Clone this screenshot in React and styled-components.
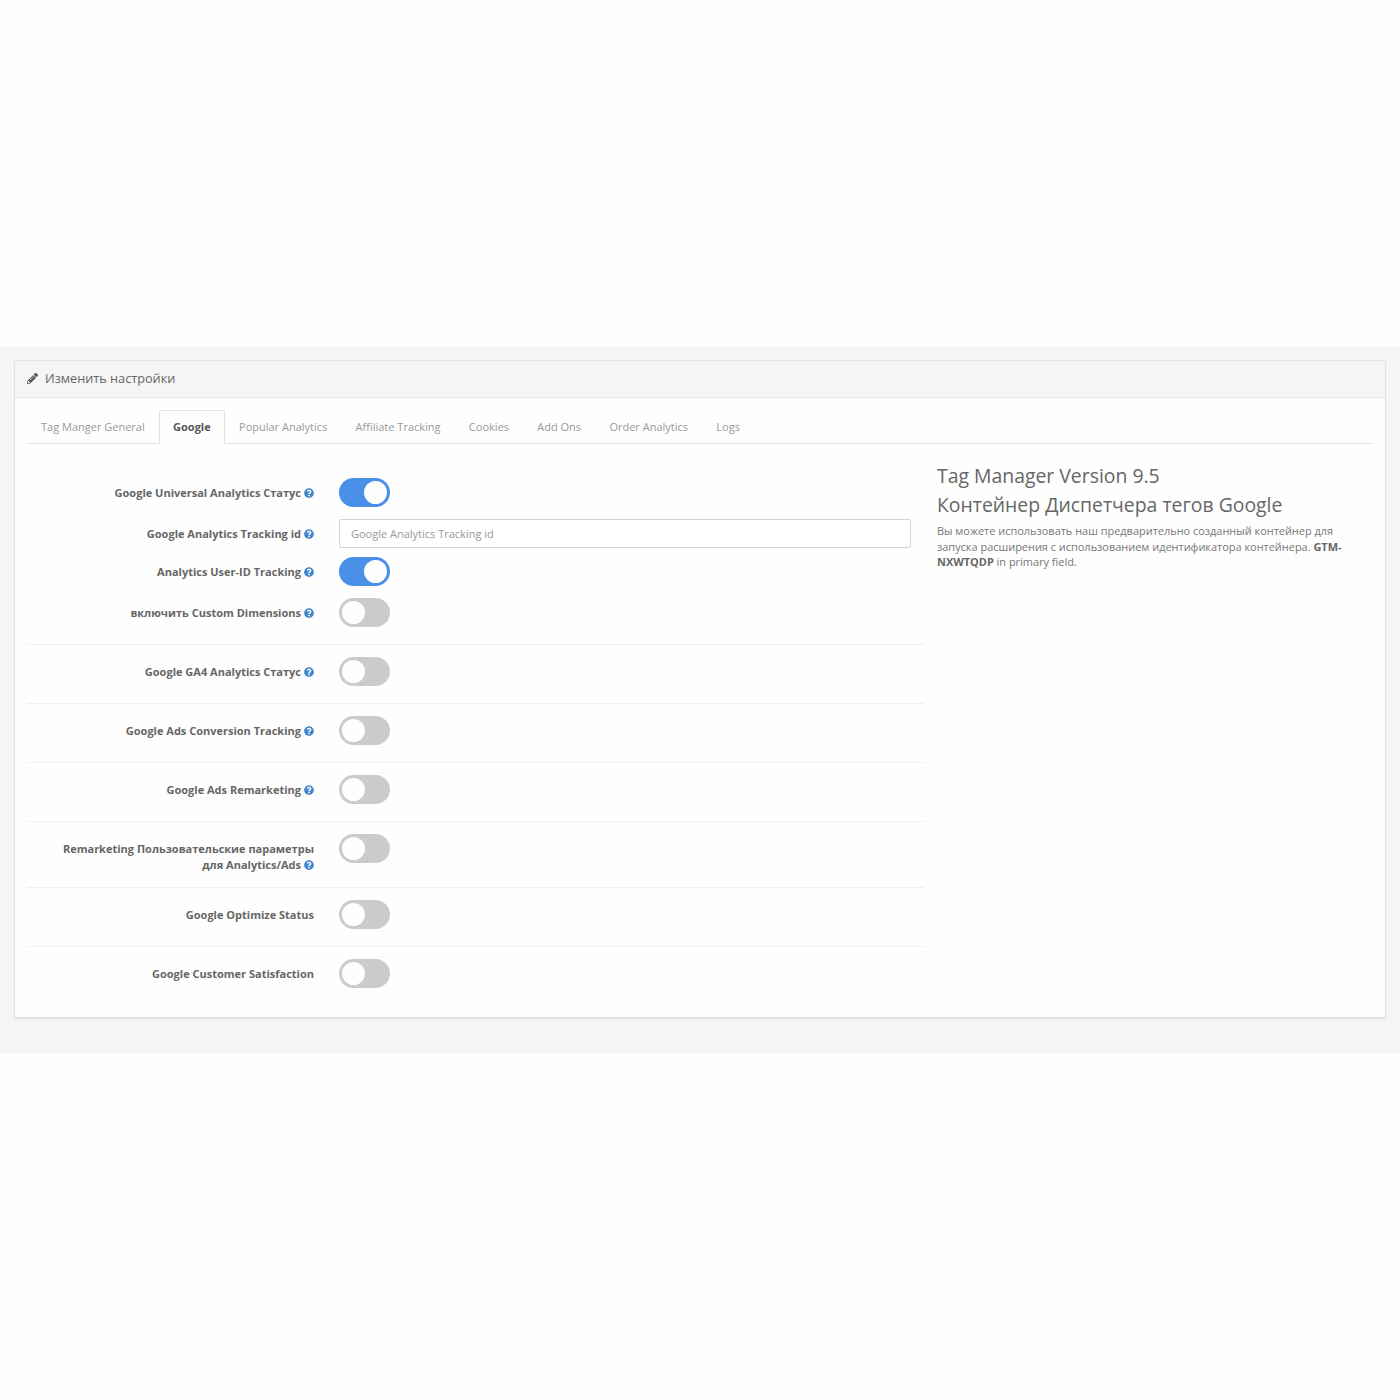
import React from 'react';
import styled, { createGlobalStyle } from 'styled-components';
import { FaPencilAlt, FaQuestionCircle } from 'react-icons/fa';

const TABS = [
	'Tag Manger General',
	'Google',
	'Popular Analytics',
	'Affiliate Tracking',
	'Cookies',
	'Add Ons',
	'Order Analytics',
	'Logs'
];

export default function App() {
	return (
		<Band>
			<GlobalStyle />
			<Panel>
				<PanelHeading>
					<FaPencilAlt />
					Изменить настройки
				</PanelHeading>
				<PanelBody>
					<Tabs>
						{TABS.map(tab => (
							<Tab key={tab} $active={tab === 'Google'}>
								{tab}
							</Tab>
						))}
					</Tabs>
					<Columns>
						<Form>
							<Section>
								<Row $gap={12}>
									<Label help>Google Universal Analytics Статус</Label>
									<Toggle on />
								</Row>
								<Row $gap={9}>
									<Label help>Google Analytics Tracking id</Label>
									<Input placeholder='Google Analytics Tracking id' />
								</Row>
								<Row $gap={12}>
									<Label help>Analytics User-ID Tracking</Label>
									<Toggle on />
								</Row>
								<Row $gap={0}>
									<Label help>включить Custom Dimensions</Label>
									<Toggle />
								</Row>
							</Section>
							<Section>
								<Row>
									<Label help>Google GA4 Analytics Статус</Label>
									<Toggle />
								</Row>
							</Section>
							<Section>
								<Row>
									<Label help>Google Ads Conversion Tracking</Label>
									<Toggle />
								</Row>
							</Section>
							<Section>
								<Row>
									<Label help>Google Ads Remarketing</Label>
									<Toggle />
								</Row>
							</Section>
							<Section $tall>
								<Row>
									<Label help>
										Remarketing Пользовательские параметры для Analytics/Ads
									</Label>
									<Toggle />
								</Row>
							</Section>
							<Section>
								<Row>
									<Label>Google Optimize Status</Label>
									<Toggle />
								</Row>
							</Section>
							<Section>
								<Row>
									<Label>Google Customer Satisfaction</Label>
									<Toggle />
								</Row>
							</Section>
						</Form>
						<Aside>
							<AsideTitle>Tag Manager Version 9.5</AsideTitle>
							<AsideTitle>Контейнер Диспетчера тегов Google</AsideTitle>
							<AsideText>
								Вы можете использовать наш предварительно созданный контейнер для
								запуска расширения с использованием идентификатора контейнера.{' '}
								<strong>GTM-NXWTQDP</strong> in primary field.
							</AsideText>
						</Aside>
					</Columns>
				</PanelBody>
			</Panel>
		</Band>
	);
}

function Label({ help, children }) {
	return (
		<LabelText>
			{children}
			{help && (
				<HelpIcon>
					<FaQuestionCircle />
				</HelpIcon>
			)}
		</LabelText>
	);
}

function Toggle({ on }) {
	return (
		<ToggleTrack $on={on}>
			<ToggleKnob />
		</ToggleTrack>
	);
}

const GlobalStyle = createGlobalStyle`
	body {
		margin: 0;
		background: #fefefe;
		font-family: 'Open Sans', 'Noto Sans', sans-serif;
		color: #666;
	}
`;

const Band = styled.div`
	margin-top: 347px;
	padding: 13px 14px 34px;
	background: #f5f5f5;
`;

const Panel = styled.div`
	background: #fefefe;
	border: 1px solid #e3e3e3;
	border-bottom-width: 2px;
`;

const PanelHeading = styled.div`
	display: flex;
	align-items: center;
	gap: 7px;
	height: 37px;
	padding: 0 12px 2px;
	box-sizing: border-box;
	background: #f5f5f5;
	border-bottom: 1px solid #e3e3e3;
	font-size: 12.7px;
	color: #666;
	svg {
		width: 11px;
		height: 11px;
		color: #555;
	}
`;

const PanelBody = styled.div`
	padding: 12px 12px 0;
`;

const Tabs = styled.div`
	display: flex;
	gap: 2.3px;
	height: 34px;
	padding-left: 1px;
	box-sizing: border-box;
	border-bottom: 1px solid #e3e3e3;
`;

const Tab = styled.div`
	height: 34px;
	box-sizing: border-box;
	margin: 0 ${props => (props.$active ? -1 : 0)}px;
	padding: 0 ${props => (props.$active ? 13 : 12)}px;
	line-height: 31px;
	font-size: 11px;
	font-weight: ${props => (props.$active ? 700 : 400)};
	color: ${props => (props.$active ? '#555' : '#999')};
	background: ${props => (props.$active ? '#fefefe' : 'transparent')};
	border: 1px solid ${props => (props.$active ? '#e3e3e3' : 'transparent')};
	border-bottom-color: ${props => (props.$active ? '#fefefe' : 'transparent')};
	border-radius: 2px 2px 0 0;
`;

const Columns = styled.div`
	display: flex;
`;

const Form = styled.div`
	width: 897px;
	padding-top: 21px;
	padding-bottom: 17px;
`;

const Section = styled.div`
	padding: 12px 0 ${props => (props.$tall ? 14 : 17)}px;
	border-bottom: 1px solid #f0f0f0;
	&:first-child {
		padding-top: 13px;
	}
	&:last-child {
		border-bottom: none;
		padding-bottom: 12px;
	}
`;

const Row = styled.div`
	display: grid;
	grid-template-columns: 287px 1fr;
	column-gap: 25px;
	align-items: start;
	margin-bottom: ${props => props.$gap || 0}px;
`;

const LabelText = styled.div`
	padding: 7px 0 0 30px;
	text-align: right;
	font-size: 11px;
	line-height: 16px;
	font-weight: 700;
	color: #666;
`;

const HelpIcon = styled.span`
	display: inline-block;
	margin-left: 3px;
	vertical-align: -1px;
	color: #3f86cc;
	svg {
		display: block;
		width: 10px;
		height: 10px;
	}
`;

const ToggleTrack = styled.div`
	display: flex;
	justify-content: ${props => (props.$on ? 'flex-end' : 'flex-start')};
	align-items: center;
	width: 51px;
	height: 29px;
	padding: 0 3px;
	box-sizing: border-box;
	border-radius: 15px;
	background: ${props => (props.$on ? '#4a90e9' : '#cbcbcb')};
`;

const ToggleKnob = styled.div`
	width: 23px;
	height: 23px;
	border-radius: 50%;
	background: #fefefe;
`;

const Input = styled.input`
	display: block;
	width: 572px;
	height: 29px;
	padding: 0 11px;
	box-sizing: border-box;
	background: #fff;
	border: 1px solid #d5d5d5;
	border-radius: 2px;
	outline: none;
	font-family: inherit;
	font-size: 11px;
	&::placeholder {
		color: #999;
		opacity: 1;
	}
`;

const Aside = styled.div`
	flex: 1;
	padding: 17px 12px 0 13px;
`;

const AsideTitle = styled.div`
	font-size: 19.4px;
	line-height: 29px;
	color: #666;
`;

const AsideText = styled.p`
	margin: 4px 0 0;
	font-size: 10.95px;
	line-height: 15.5px;
	color: #777;
	strong {
		color: #666;
	}
`;
